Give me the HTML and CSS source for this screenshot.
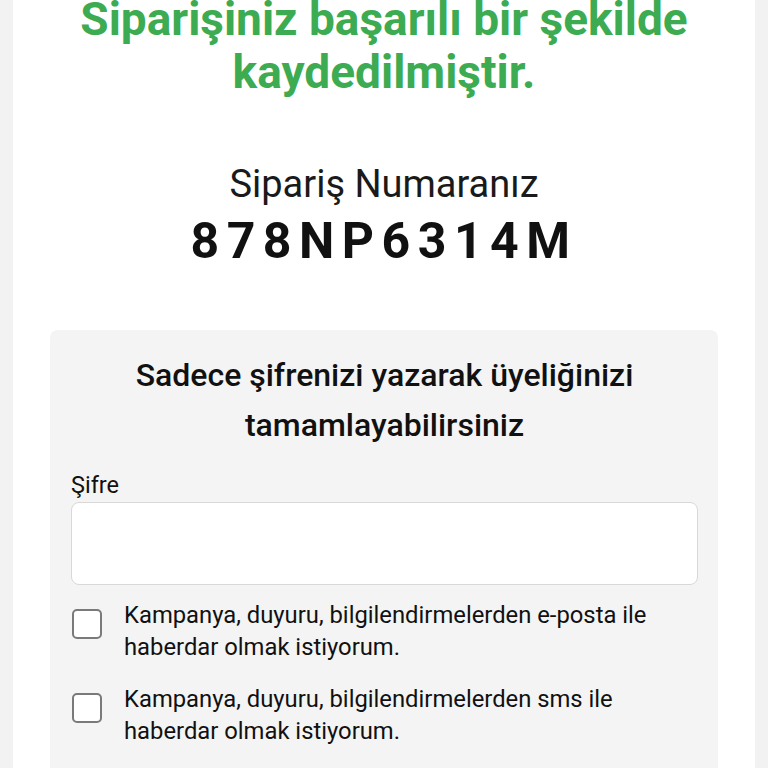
FILE: index.html
```html
<!DOCTYPE html>
<html lang="tr">
<head>
    <meta charset="UTF-8">
    <meta name="viewport" content="width=device-width, initial-scale=1.0">
    <title>Sipariş Tamamlandı</title>
    <link rel="stylesheet" href="styles.css">
</head>
<body>
    <div class="page">
        <h1 class="success-title">Siparişiniz başarılı bir şekilde kaydedilmiştir.</h1>

        <div class="order-info">
            <div class="order-label">Sipariş Numaranız</div>
            <div class="order-number">878NP6314M</div>
        </div>

        <div class="register-box">
            <h2>Sadece şifrenizi yazarak üyeliğinizi tamamlayabilirsiniz</h2>
            <form id="registerForm">
                <div class="form-group">
                    <label for="password">Şifre</label>
                    <input type="password" id="password" name="password">
                </div>
                <label class="check-row">
                    <input type="checkbox" name="emailPermission">
                    <span class="box"></span>
                    <span class="check-text">Kampanya, duyuru, bilgilendirmelerden e-posta ile haberdar olmak istiyorum.</span>
                </label>
                <label class="check-row">
                    <input type="checkbox" name="smsPermission">
                    <span class="box"></span>
                    <span class="check-text">Kampanya, duyuru, bilgilendirmelerden sms ile haberdar olmak istiyorum.</span>
                </label>
            </form>
        </div>
    </div>
</body>
</html>
```

FILE: styles.css
```css
body {
    background-color: #f2f2f2;
    font-family: Roboto, "Liberation Sans", Arial, sans-serif;
    color: #111;
    margin: 0;
    padding: 0;
}

.page {
    background-color: white;
    margin: 0 13px;
    min-height: 100vh;
    padding: 0 37px 40px;
}

.success-title {
    margin: -7px 0 0;
    color: #3cab51;
    font-size: 46px;
    line-height: 53px;
    font-weight: bold;
    text-align: center;
}

.order-info {
    margin-top: 62px;
    text-align: center;
}

.order-label {
    font-size: 38px;
    line-height: 46px;
    color: #1a1a1a;
}

.order-number {
    margin-top: 4px;
    font-size: 50px;
    line-height: 60px;
    font-weight: bold;
    letter-spacing: 7.5px;
}

.register-box {
    margin-top: 59px;
    background-color: #f4f4f4;
    border-radius: 8px;
    padding: 20px 20px 30px 21px;
}

.register-box h2 {
    margin: 0 10px;
    font-size: 32px;
    line-height: 50px;
    font-weight: 500;
    text-align: center;
}

.form-group {
    margin-top: 22px;
}

.form-group label {
    display: block;
    font-size: 23.5px;
    line-height: 26px;
}

.form-group input {
    display: block;
    width: 100%;
    height: 83px;
    margin-top: 4px;
    box-sizing: border-box;
    border: 1.5px solid #d8d8d8;
    border-radius: 8px;
    background-color: white;
    font-size: 22px;
    padding: 0 16px;
}

.check-row {
    display: flex;
    align-items: flex-start;
    margin-top: 14px;
    cursor: pointer;
}

.check-row + .check-row {
    margin-top: 20px;
}

.check-row input {
    display: none;
}

.check-row .box {
    flex: none;
    width: 30px;
    height: 30px;
    box-sizing: border-box;
    margin: 10px 22px 0 1px;
    border: 2px solid #7a7a7a;
    border-radius: 5px;
    background-color: white;
}

.check-row input:checked + .box {
    background-color: #3cab51;
    border-color: #3cab51;
}

.check-text {
    font-size: 23.8px;
    line-height: 32px;
}
```
